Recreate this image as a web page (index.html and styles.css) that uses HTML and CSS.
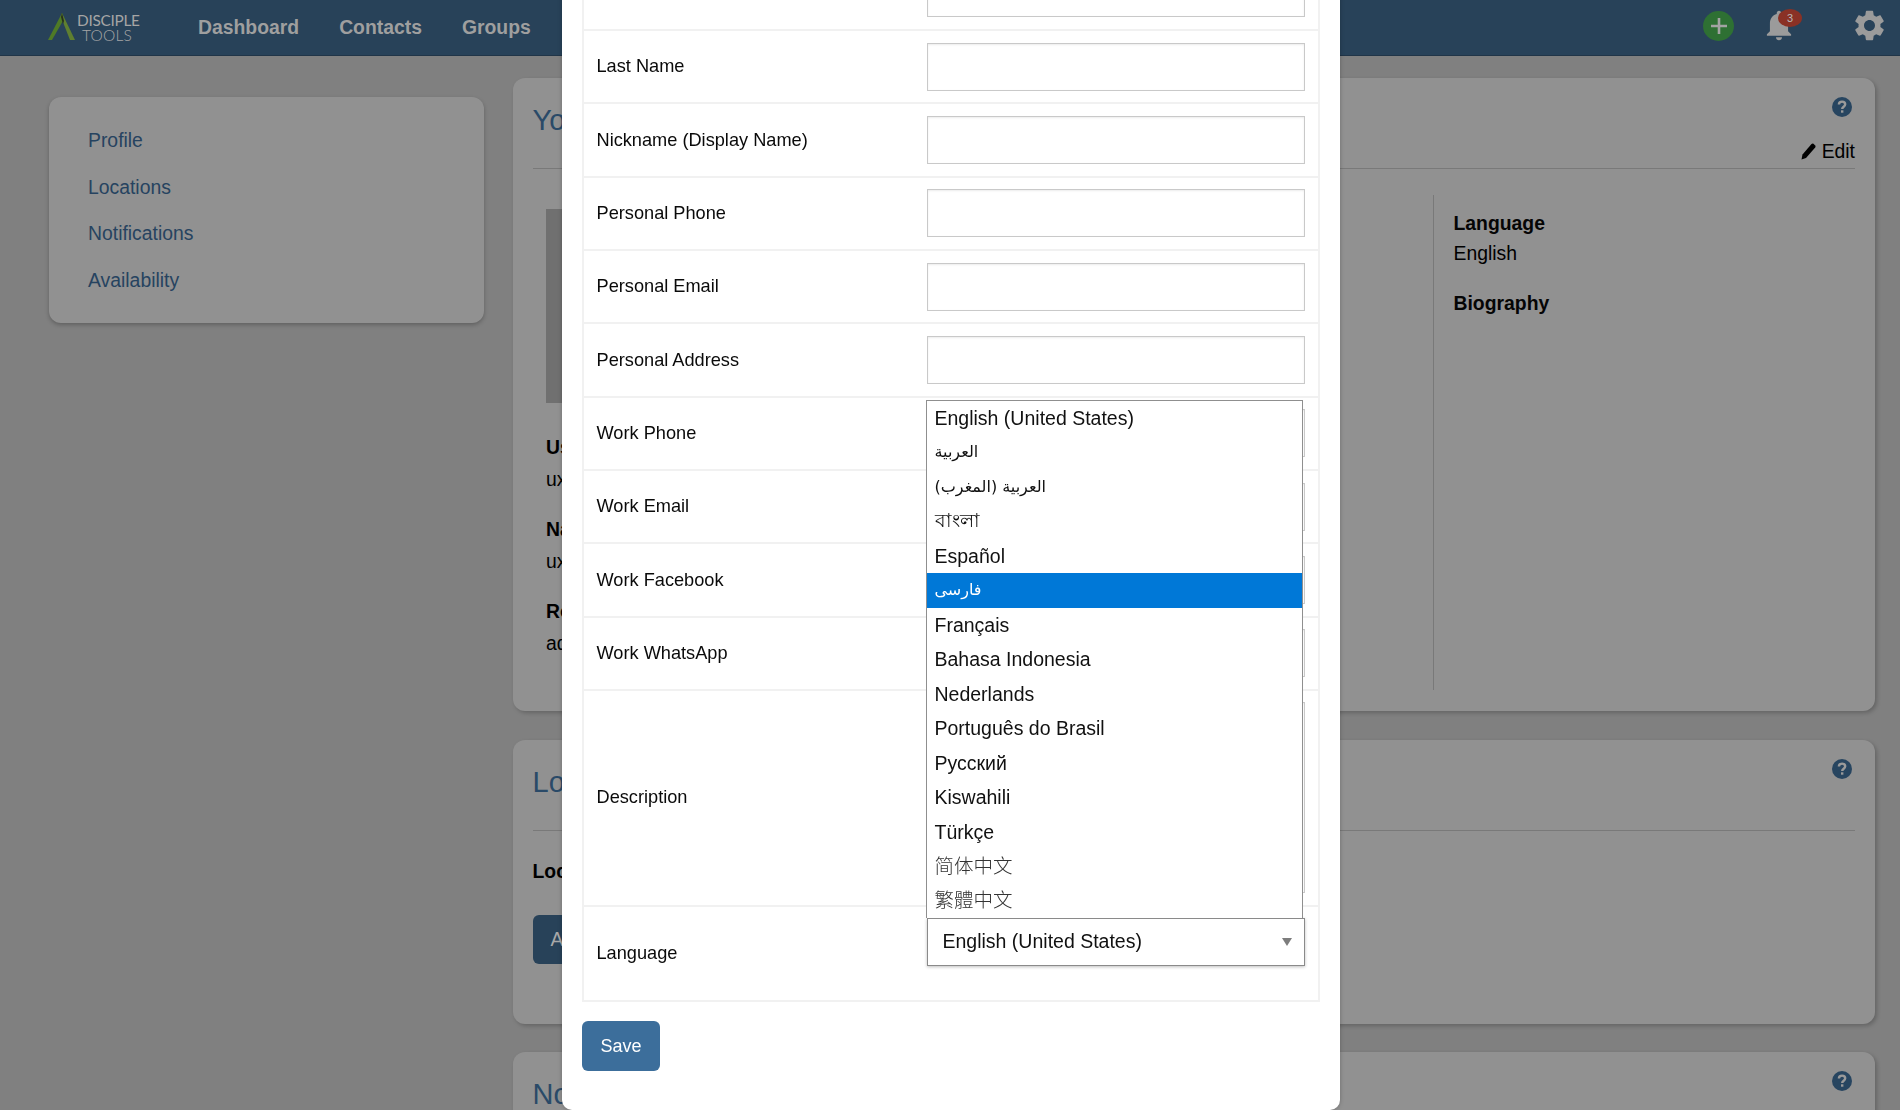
FILE: index.html
```html
<!DOCTYPE html>
<html lang="en">
<head>
<meta charset="utf-8">
<title>Profile - Disciple Tools</title>
<link rel="stylesheet" href="styles.css">
</head>
<body>
<header class="topbar">
  <a class="logo">
    <svg class="logo-mark" viewBox="0 0 28 27" width="28" height="27"><polygon points="14,0 16,6 4,27 0,27" fill="#4f7a26"/><polygon points="14,0 27,27 22,27 13,4" fill="#5f7f30"/><polygon points="14,0 16,8 15,11 13,4" fill="#26301c"/></svg>
    <span class="logo-text"><span class="logo-top">DISCIPLE</span><span class="logo-bottom">TOOLS</span></span>
  </a>
  <nav class="nav">
    <a>Dashboard</a>
    <a>Contacts</a>
    <a>Groups</a>
  </nav>
  <div class="actions">
    <span class="add-btn"><svg viewBox="0 0 20 20" width="20" height="20"><path d="M10 2v16M2 10h16" stroke="#a3a3a3" stroke-width="2.6" fill="none"/></svg></span>
    <span class="bell">
      <svg viewBox="4 2 16 20.5" width="26" height="31"><path fill="#9b9b9b" d="M12 22c1.1 0 2-.9 2-2h-4c0 1.1.89 2 2 2zm6-6v-5c0-3.07-1.64-5.64-4.5-6.32V4c0-.83-.67-1.5-1.5-1.5s-1.5.67-1.5 1.5v.68C7.63 5.36 6 7.92 6 11v5l-2 2v1h16v-1l-2-2z"/></svg>
      <span class="badge">3</span>
    </span>
    <svg class="gear" viewBox="2.5 2 19 20" width="29" height="31"><path fill="#9b9b9b" d="M19.14 12.94c.04-.3.06-.61.06-.94 0-.32-.02-.64-.07-.94l2.03-1.58c.18-.14.23-.41.12-.61l-1.92-3.32c-.12-.22-.37-.29-.59-.22l-2.39.96c-.5-.38-1.03-.7-1.62-.94l-.36-2.54c-.04-.24-.24-.41-.48-.41h-3.84c-.24 0-.43.17-.47.41l-.36 2.54c-.59.24-1.13.57-1.62.94l-2.39-.96c-.22-.08-.47 0-.59.22L2.74 8.87c-.12.21-.08.47.12.61l2.03 1.58c-.05.3-.09.63-.09.94s.02.64.07.94l-2.03 1.58c-.18.14-.23.41-.12.61l1.92 3.32c.12.22.37.29.59.22l2.39-.96c.5.38 1.03.7 1.62.94l.36 2.54c.05.24.24.41.48.41h3.84c.24 0 .44-.17.47-.41l.36-2.54c.59-.24 1.13-.56 1.62-.94l2.39.96c.22.08.47 0 .59-.22l1.92-3.32c.12-.22.07-.47-.12-.61l-2.01-1.58zM12 15.6c-1.98 0-3.6-1.62-3.6-3.6s1.62-3.6 3.6-3.6 3.6 1.62 3.6 3.6-1.62 3.6-3.6 3.6z"/></svg>
  </div>
</header>

<main class="page">
  <aside class="sidebar">
    <a>Profile</a>
    <a>Locations</a>
    <a>Notifications</a>
    <a>Availability</a>
  </aside>
  <div class="content">
    <section class="card card-profile">
      <div class="card-head">
        <h2>Your Profile</h2>
        <div class="head-tools">
          <svg class="help" viewBox="0 0 20 20" width="20" height="20"><circle cx="10" cy="10" r="10" fill="#274560"/><path d="M6.9 7.6c0-1.9 1.4-3 3.2-3s3.100 1.100 3.100 2.700c0 2.400-3 2.400-3 4.700" fill="none" stroke="#9a9a9a" stroke-width="2.400"/><rect x="9" y="13.300" width="2.400" height="2.400" fill="#9a9a9a"/></svg>
          <a class="edit"><svg viewBox="0 0 15 17" width="15" height="17"><path fill="#000" d="M0.500 16.500 L1.500 11.500 L10.500 1 Q11.500 0 12.500 .8 L14.200 2.600 Q15 3.600 14.200 4.600 L5 15 Z"/></svg>Edit</a>
        </div>
      </div>
      <div class="profile-body">
        <div class="profile-main">
          <div class="avatar"></div>
          <dl class="fields">
            <dt>Username</dt><dd>uxtester</dd>
            <dt>Name</dt><dd>uxtester</dd>
            <dt>Roles</dt><dd>administrator</dd>
          </dl>
        </div>
        <dl class="profile-side">
          <dt>Language</dt><dd>English</dd>
          <dt>Biography</dt>
        </dl>
      </div>
    </section>
    <section class="card card-locations">
      <div class="card-head">
        <h2>Locations</h2>
        <div class="head-tools">
          <svg class="help" viewBox="0 0 20 20" width="20" height="20"><circle cx="10" cy="10" r="10" fill="#274560"/><path d="M6.9 7.6c0-1.9 1.4-3 3.2-3s3.100 1.100 3.100 2.700c0 2.400-3 2.400-3 4.700" fill="none" stroke="#9a9a9a" stroke-width="2.400"/><rect x="9" y="13.300" width="2.400" height="2.400" fill="#9a9a9a"/></svg>
        </div>
      </div>
      <h3 class="loc-title">Locations</h3>
      <a class="add-loc">Add</a>
    </section>
    <section class="card">
      <div class="card-head">
        <h2>Notifications</h2>
        <div class="head-tools">
          <svg class="help" viewBox="0 0 20 20" width="20" height="20"><circle cx="10" cy="10" r="10" fill="#274560"/><path d="M6.9 7.6c0-1.9 1.4-3 3.2-3s3.100 1.100 3.100 2.700c0 2.400-3 2.400-3 4.700" fill="none" stroke="#9a9a9a" stroke-width="2.400"/><rect x="9" y="13.300" width="2.400" height="2.400" fill="#9a9a9a"/></svg>
        </div>
      </div>
    </section>
  </div>
</main>

<div class="modal">
  <div class="form-table">
    <div class="row"><label>First Name</label><span class="input"></span></div>
    <div class="row"><label>Last Name</label><span class="input"></span></div>
    <div class="row"><label>Nickname (Display Name)</label><span class="input"></span></div>
    <div class="row"><label>Personal Phone</label><span class="input"></span></div>
    <div class="row"><label>Personal Email</label><span class="input"></span></div>
    <div class="row"><label>Personal Address</label><span class="input"></span></div>
    <div class="row"><label>Work Phone</label><span class="input"></span></div>
    <div class="row"><label>Work Email</label><span class="input"></span></div>
    <div class="row"><label>Work Facebook</label><span class="input"></span></div>
    <div class="row"><label>Work WhatsApp</label><span class="input"></span></div>
    <div class="row row-desc"><label>Description</label><span class="input textarea"></span></div>
    <div class="row row-lang">
      <label>Language</label>
      <div class="select">
        <span>English (United States)</span>
        <i class="caret"></i>
        <ul class="options">
          <li>English (United States)</li>
          <li class="ar">العربية</li>
          <li class="ar">العربية (المغرب)</li>
          <li class="bn">বাংলা</li>
          <li>Español</li>
          <li class="ar selected">فارسی</li>
          <li>Français</li>
          <li>Bahasa Indonesia</li>
          <li>Nederlands</li>
          <li>Português do Brasil</li>
          <li>Русский</li>
          <li>Kiswahili</li>
          <li>Türkçe</li>
          <li class="cjk-sc">简体中文</li>
          <li class="cjk-tc">繁體中文</li>
        </ul>
      </div>
    </div>
  </div>
  <button class="save">Save</button>
</div>
</body>
</html>
```
FILE: styles.css
```css
* { box-sizing: border-box; }
html, body { margin: 0; height: 1110px; overflow: hidden; }
body {
  background: #808080;
  font-family: "Liberation Sans", Arial, sans-serif;
  font-size: 19.36px;
  color: #000;
}
h2, h3, dl, dd, ul { margin: 0; padding: 0; }

.topbar {
  height: 56px;
  background: #284259;
  border-bottom: 1px solid #213548;
  display: flex;
  align-items: center;
  padding-left: 48px;
}
.logo { display: flex; align-items: center; width: 90px; height: 30px; margin-top: -2px; }
.logo-mark { flex: none; }
.logo-text { display: flex; flex-direction: column; margin-left: 1px; font-family: Lato, sans-serif; font-weight: 300; color: #a5a5a5; line-height: 14px; }
.logo-top { font-size: 15.400px; font-weight: 400; letter-spacing: -.3px; }
.logo-bottom { font-size: 15.500px; margin: 1px 0 -1px 5px; letter-spacing: .2px; }
.nav { display: flex; gap: 40px; margin-left: 60px; font-weight: 700; color: #9f9f9f; }
.actions { margin-left: auto; display: flex; align-items: center; padding-right: 16px; margin-top: -4px; }
.add-btn { width: 31px; height: 30px; border-radius: 50%; background: #2e7033; display: flex; align-items: center; justify-content: center; }
.bell { position: relative; display: block; width: 26px; height: 31px; margin-left: 32px; }
.badge { position: absolute; left: 12px; top: -1px; width: 24px; height: 18px; border-radius: 50%; background: #8a3125; color: #b9b9b9; font-size: 11px; line-height: 18px; text-align: center; }
.gear { margin-left: 63px; }

.page { display: flex; gap: 29px; padding: 22px 25px 0 48.500px; align-items: flex-start; }
.sidebar {
  width: 435.500px;
  margin-top: 19px;
  padding: 20px 39.500px;
  height: 226px;
  background: #919191;
  border-radius: 12px;
  box-shadow: 0 2px 4px rgba(0,0,0,.25);
  color: #264360;
}
.sidebar a { display: block; line-height: 46.67px; }
.content { flex: 1; display: flex; flex-direction: column; gap: 28.500px; }
.card {
  background: #919191;
  border-radius: 12px;
  box-shadow: 2px 2px 4px rgba(0,0,0,.22);
  padding: 19px 20px 0 19.500px;
}
.card-profile { height: 633px; }
.card-locations { height: 284px; }
.card-head {
  box-sizing: content-box;
  border-bottom: 1.500px solid #797979;
  height: 71px;
  display: flex;
  justify-content: space-between;
}
.card-head h2 { font-size: 29px; font-weight: 400; line-height: 34px; margin-top: 6px; color: #2a4a68; }
.head-tools { display: flex; flex-direction: column; align-items: flex-end; }
.help { margin-right: 3px; display: block; }
.edit { display: flex; align-items: center; gap: 6px; margin-top: 21px; color: #000; line-height: 26px; }

.profile-body { display: flex; margin-top: 26px; height: 495px; }
.profile-main { width: 900.500px; padding: 14px 0 0 13.500px; }
.avatar { width: 200px; height: 194px; background: #707070; }
.fields { margin-top: 28px; line-height: 32px; }
.fields dt { font-weight: 700; }
.fields dd { margin-bottom: 18px; }
.profile-side { flex: 1; border-left: 1.500px solid #797979; padding: 13px 0 0 19.500px; line-height: 30px; }
.profile-side dt { font-weight: 700; color: #050505; }
.profile-side dd { margin-bottom: 20px; }

.loc-title { font-size: 19.36px; line-height: 30px; margin-top: 25px; }
.add-loc { display: block; width: 120px; height: 49px; margin-top: 29px; background: #284259; border-radius: 6px; color: #a8a8a8; line-height: 49px; padding-left: 18px; }

.modal {
  position: fixed;
  left: 562px;
  top: -20px;
  width: 778px;
  height: 1130px;
  background: #fff;
  border-radius: 10px;
  padding: 0 20px 39px;
  overflow: hidden;
  display: flex;
  flex-direction: column;
  justify-content: flex-end;
  box-shadow: 0 0 4px rgba(0,0,0,.25);
}
.form-table { flex: none; width: 738px; border: 2px solid #f1f1f1; border-top: 0; }
.row {
  height: 73.330px;
  border-bottom: 2px solid #f1f1f1;
  display: grid;
  grid-template-columns: 330px 378px;
  align-items: center;
  padding-left: 12.500px;
  font-size: 18.200px;
  color: #0a0a0a;
}
.row:last-child { border-bottom: 0; }
.input {
  display: block;
  height: 48px;
  border: 1.500px solid #c9c9c9;
  box-shadow: inset 0 1px 2px rgba(0,0,0,.08);
  background: #fff;
}
.row-desc { height: 215.500px; }
.textarea { height: 191px; }
.row-lang { height: 93.500px; }
.select {
  position: relative;
  align-self: start;
  margin-top: 11.500px;
  height: 48px;
  border: 1.500px solid #8a8a8a;
  box-shadow: 0 1px 3px rgba(0,0,0,.25);
  background: #fff;
  padding-left: 15px;
  line-height: 45px;
  font-size: 19.500px;
  color: #111;
}
.caret {
  position: absolute;
  right: 12px;
  top: 19px;
  border-style: solid;
  border-width: 8px 5.500px 0;
  border-color: #7d7d7d transparent transparent;
}
.options {
  position: absolute;
  left: -1.500px;
  bottom: calc(100% + 1px);
  width: 376.500px;
  background: #fff;
  border: 1px solid #8f8f8f;
  border-top-width: 1.500px;
  border-bottom: 0;
  list-style: none;
  font-size: 19.500px;
}
.options li { height: 34.470px; line-height: 34.470px; padding-left: 7.500px; color: #111; white-space: nowrap; overflow: hidden; }
.options .ar { font-family: "DejaVu Sans", "Noto Sans", sans-serif; font-size: 16px; text-align: left; direction: ltr; unicode-bidi: plaintext; }
.options .bn { font-family: "Noto Sans", "DejaVu Sans", sans-serif; font-size: 18.500px; line-height: 32px; }
.options .cjk-sc { font-family: "Noto Sans CJK SC", sans-serif; font-weight: 300; color: #333; line-height: 32px; }
.options .cjk-tc { font-family: "Noto Sans CJK TC", sans-serif; font-weight: 300; color: #333; line-height: 30px; }
.options .selected { background: #0078d7; color: #fff; }

.save {
  flex: none;
  align-self: flex-start;
  margin-top: 19px;
  width: 78px;
  height: 50px;
  border: 0;
  border-radius: 6px;
  background: #3c6e9b;
  color: #fff;
  font: 400 18px "Liberation Sans", Arial, sans-serif;
}
```
